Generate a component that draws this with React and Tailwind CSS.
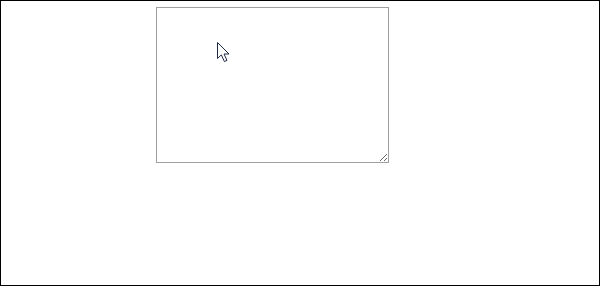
import React from 'react';

const Pointer = () => (
  <svg width="15" height="22" viewBox="0 0 15 22" className="absolute left-[215px] top-[40px] pointer-events-none">
    <path
      d="M1.5 1.5 L1.5 17.5 L5.3 13.9 L8.4 20.5 L11 19.4 L8 13 L13 13 Z"
      fill="#fff"
      stroke="#1e2a44"
      strokeWidth="1"
      strokeLinejoin="miter"
    />
  </svg>
);

const App = () => {
  return (
    <div className="relative w-[600px] h-[286px] bg-white border border-black overflow-hidden">
      <div className="pl-[155px] pt-[6px]">
        <textarea className="block w-[233px] h-[156px] border border-[#a0a0a0] bg-white resize outline-none" />
      </div>
      <Pointer />
    </div>
  );
};

export default App;
